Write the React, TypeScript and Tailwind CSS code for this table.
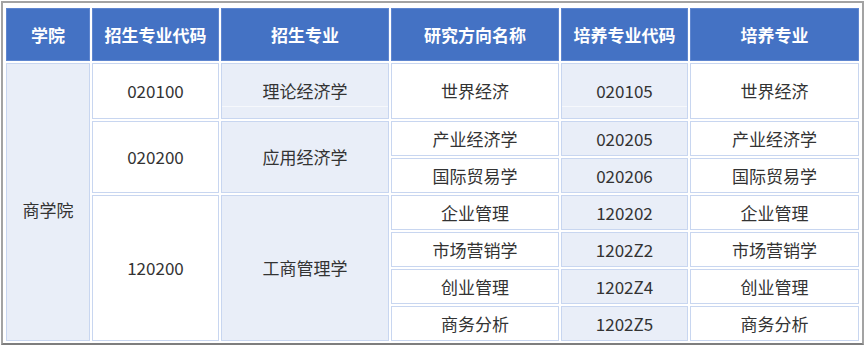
import React from 'react';

const headers = ['学院', '招生专业代码', '招生专业', '研究方向名称', '培养专业代码', '培养专业'];

const light = 'bg-[#e9eef8]';
const white = 'bg-white';

const cell = 'border border-[#c8d6f0] text-center align-middle p-0';

// faint seam that shows near the bottom of a few first-row cells
const Seam = () => <span className="absolute left-0 right-0 bottom-[11px] h-px bg-[#f6f8fc]" />;

const App: React.FC = () => {
  return (
    <div
      className="min-h-[347px] bg-white text-[#333] pt-[1px] pl-[1px]"
      style={{ fontFamily: '"Noto Sans CJK SC", "Noto Sans", sans-serif' }}
    >
      <div className="inline-block border-2 border-[#a3a3a3] border-b-[#7e7e7e] pl-[1px] pr-[1px] pt-[3px]">
        <table className="table-fixed border-separate border-spacing-[2px] w-[857px] text-[17px]">
          <colgroup>
            <col className="w-[84px]" />
            <col className="w-[127px]" />
            <col className="w-[168px]" />
            <col className="w-[168px]" />
            <col className="w-[127px]" />
            <col className="w-[169px]" />
          </colgroup>
          <thead>
            <tr className="h-[53px]">
              {headers.map((h) => (
                <th
                  key={h}
                  className="border border-[#5f86cf] bg-[#4472c4] text-white font-bold text-center align-middle p-0"
                >
                  {h}
                </th>
              ))}
            </tr>
          </thead>
          <tbody>
            <tr className="h-[56px]">
              <td rowSpan={7} className={`${cell} ${light} pt-[16px]`}>商学院</td>
              <td className={`${cell} ${white}`}>020100</td>
              <td className={`${cell} ${light} relative`}>
                理论经济学
                <Seam />
              </td>
              <td className={`${cell} ${white}`}>世界经济</td>
              <td className={`${cell} ${light} relative`}>
                020105
                <Seam />
              </td>
              <td className={`${cell} ${white}`}>世界经济</td>
            </tr>
            <tr className="h-[35px]">
              <td rowSpan={2} className={`${cell} ${white}`}>020200</td>
              <td rowSpan={2} className={`${cell} ${light}`}>应用经济学</td>
              <td className={`${cell} ${white}`}>产业经济学</td>
              <td className={`${cell} ${light}`}>020205</td>
              <td className={`${cell} ${white}`}>产业经济学</td>
            </tr>
            <tr className="h-[35px]">
              <td className={`${cell} ${white}`}>国际贸易学</td>
              <td className={`${cell} ${light}`}>020206</td>
              <td className={`${cell} ${white}`}>国际贸易学</td>
            </tr>
            <tr className="h-[35px]">
              <td rowSpan={4} className={`${cell} ${white}`}>120200</td>
              <td rowSpan={4} className={`${cell} ${light}`}>工商管理学</td>
              <td className={`${cell} ${white}`}>企业管理</td>
              <td className={`${cell} ${light}`}>120202</td>
              <td className={`${cell} ${white}`}>企业管理</td>
            </tr>
            <tr className="h-[35px]">
              <td className={`${cell} ${white}`}>市场营销学</td>
              <td className={`${cell} ${light}`}>1202Z2</td>
              <td className={`${cell} ${white}`}>市场营销学</td>
            </tr>
            <tr className="h-[35px]">
              <td className={`${cell} ${white}`}>创业管理</td>
              <td className={`${cell} ${light}`}>1202Z4</td>
              <td className={`${cell} ${white}`}>创业管理</td>
            </tr>
            <tr className="h-[35px]">
              <td className={`${cell} ${white}`}>商务分析</td>
              <td className={`${cell} ${light}`}>1202Z5</td>
              <td className={`${cell} ${white}`}>商务分析</td>
            </tr>
          </tbody>
        </table>
      </div>
    </div>
  );
};

export default App;
